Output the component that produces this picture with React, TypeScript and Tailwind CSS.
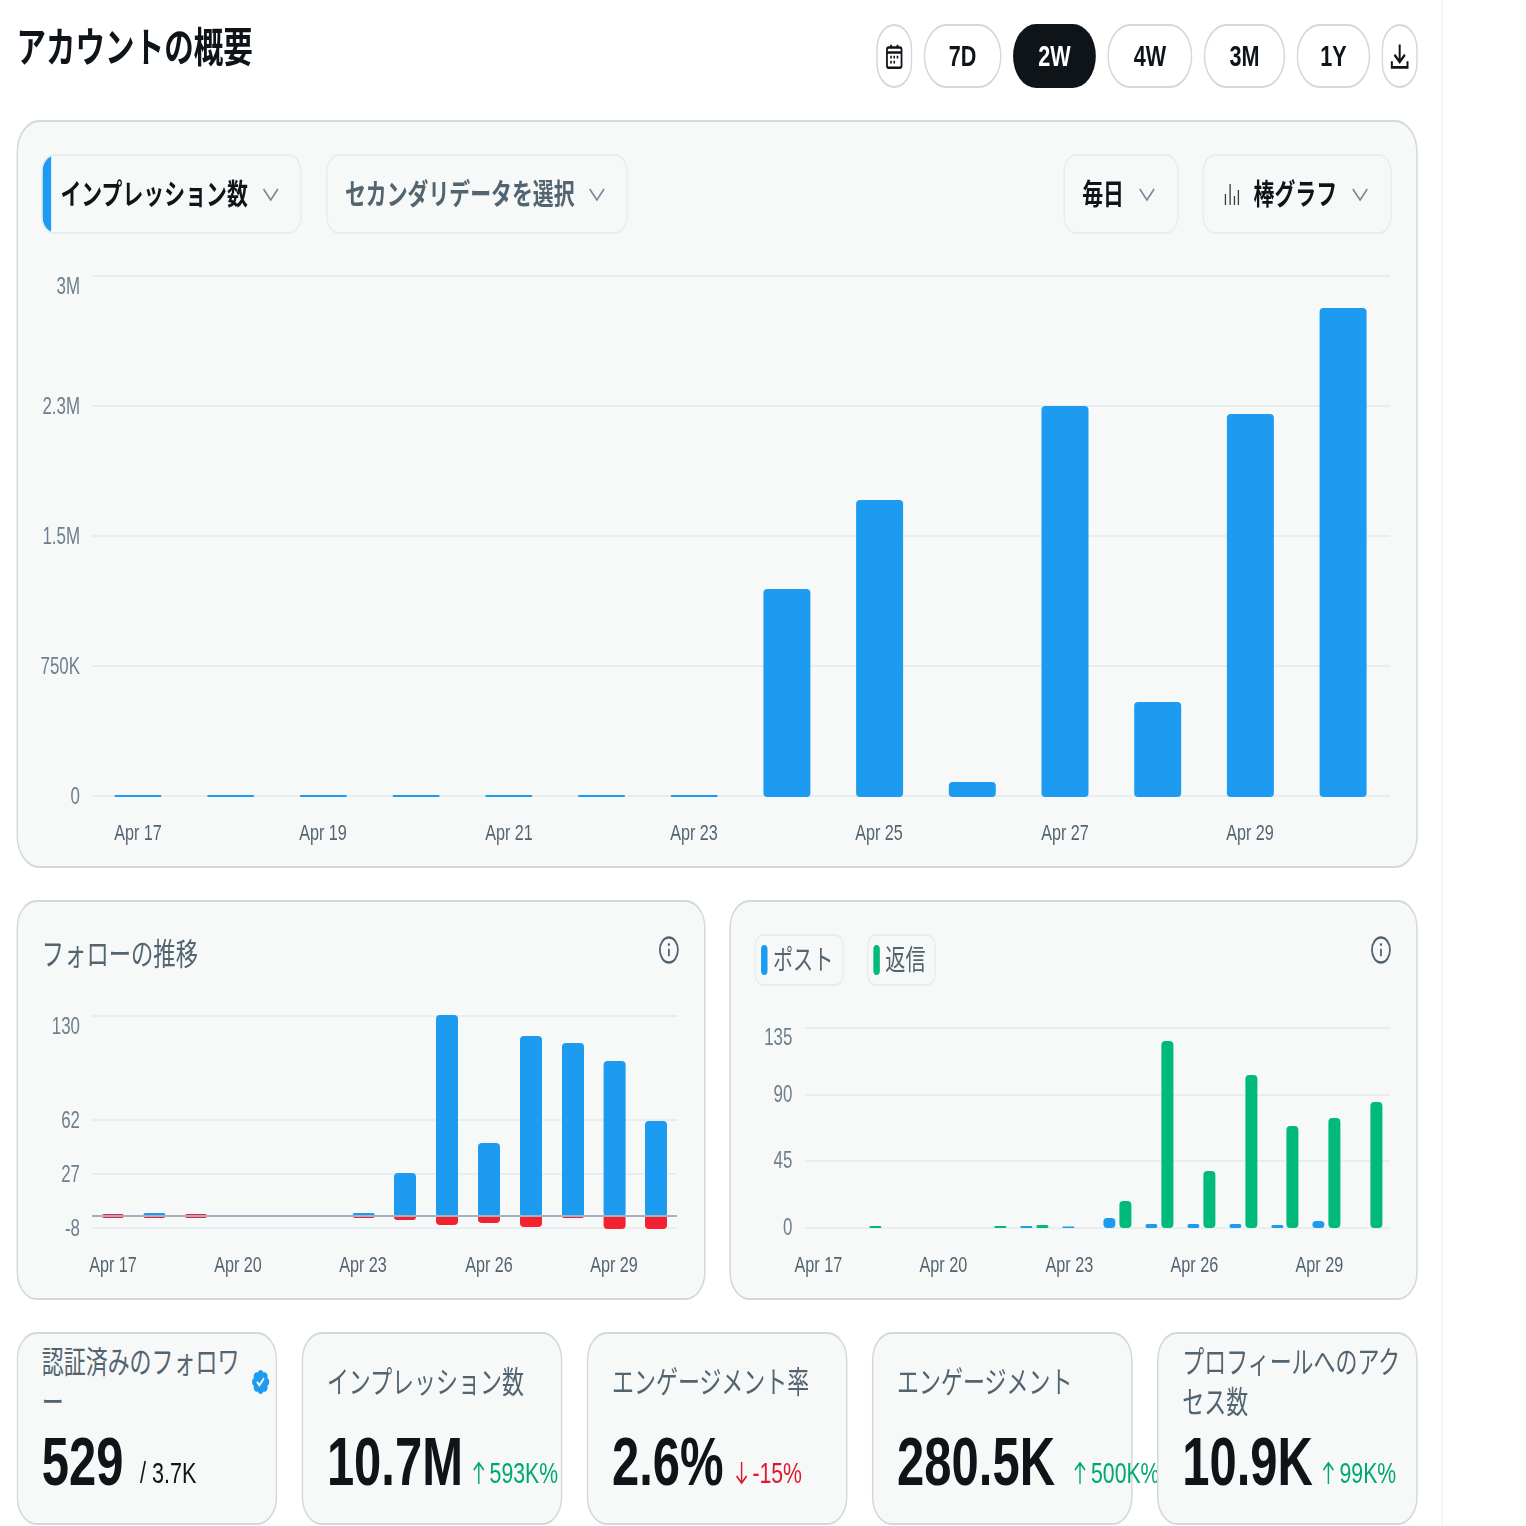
import React from "react";

const S = 0.72;

type Bar = { c: number; top: number; bottom: number; w: number; fill: string };

function barPath(b: Bar, ox: number, oy: number) {
  const x1 = (b.c - b.w / 2 - ox) / S;
  const x2 = (b.c + b.w / 2 - ox) / S;
  return { x: x1, width: x2 - x1, y: b.top - oy, height: b.bottom - b.top };
}

function Chart(props: {
  ox: number;
  oy: number;
  w: number;
  h: number;
  grid: number[];
  gx: [number, number];
  yLabels: [string, number][];
  yx: number;
  xLabels: [string, number][];
  xy: number;
  bars: Bar[];
  zero?: number;
}) {
  const { ox, oy, w, h } = props;
  const X = (x: number) => (x - ox) / S;
  return (
    <svg width={w / S} height={h} className="block overflow-visible">
      {props.grid.map((g) => (
        <line key={g} x1={X(props.gx[0])} x2={X(props.gx[1])} y1={g - oy} y2={g - oy} stroke="#e8edef" strokeWidth={2} />
      ))}
      {props.yLabels.map(([t, y]) => (
        <text key={t} x={X(props.yx)} y={y + 2 - oy} textAnchor="end" dominantBaseline="middle" fontSize={23.5} fill="#6e7f8d">
          {t}
        </text>
      ))}
      {props.xLabels.map(([t, x]) => (
        <text key={t} x={X(x)} y={props.xy + 2 - oy} textAnchor="middle" dominantBaseline="middle" fontSize={22.5} fill="#536471">
          {t}
        </text>
      ))}
      {props.bars.map((b, i) => {
        const p = barPath(b, ox, oy);
        const r = Math.min(4, p.height / 2);
        return <rect key={i} x={p.x} y={p.y} width={p.width} height={p.height} rx={r * 1.39} ry={r} fill={b.fill} />;
      })}
      {props.zero !== undefined && (
        <line x1={X(props.gx[0])} x2={X(props.gx[1])} y1={props.zero - oy} y2={props.zero - oy} stroke="#a3b2c2" strokeWidth={2} />
      )}
    </svg>
  );
}

const BLUE = "#1d9bf0";
const GREEN = "#00ba7c";
const RED = "#f4212e";

const mainTops = [795, 795, 795, 795, 795, 795, 795, 589, 500, 782, 406, 702, 414, 308];
const mainBars: Bar[] = mainTops.map((t, i) => ({ c: 138 + i * 92.7, top: t, bottom: 797, w: 47, fill: BLUE }));

const followUp: [number, number][] = [[154.4, 1213], [363.7, 1213], [405, 1173], [447, 1015], [489, 1143], [531, 1036], [573, 1043], [614.6, 1061], [656, 1121]];
const followDown: [number, number][] = [[113, 1218], [154.4, 1218], [196, 1218], [363.7, 1218], [405, 1220], [447, 1225], [489, 1223], [531, 1227], [573, 1218], [614.6, 1229], [656, 1229]];
const followBars: Bar[] = [
  ...followDown.map(([c, b]) => ({ c, top: 1214, bottom: b, w: 22, fill: RED })),
  ...followUp.map(([c, t]) => ({ c, top: t, bottom: 1217, w: 22, fill: BLUE })),
];

const replies: [number, number][] = [[875, 1226], [1000, 1226], [1042, 1225], [1125, 1201], [1167, 1041], [1209, 1171], [1251, 1075], [1292, 1126], [1334, 1118], [1376, 1102]];
const posts: [number, number][] = [[1026, 1226], [1068, 1226.5], [1109, 1218], [1151, 1224], [1193, 1224], [1235, 1224], [1277, 1225], [1318, 1221]];
const postBars: Bar[] = [
  ...posts.map(([c, t]) => ({ c, top: t, bottom: 1228, w: 12, fill: BLUE })),
  ...replies.map(([c, t]) => ({ c, top: t, bottom: 1228, w: 12, fill: GREEN })),
];

function Chevron({ className }: { className: string }) {
  return (
    <svg viewBox="0 0 24 24" className={className} fill="none" stroke="#7b8a96" strokeWidth={2}>
      <path d="M2 7l10 11L22 7" />
    </svg>
  );
}

function Info({ className }: { className: string }) {
  return (
    <svg viewBox="0 0 24 24" className={className} fill="none" stroke="#536471" strokeWidth={2}>
      <circle cx="12" cy="12" r="10" />
      <path d="M12 11v6" />
      <circle cx="12" cy="7.5" r="1.2" fill="#536471" stroke="none" />
    </svg>
  );
}

function PeriodButton({ label, className }: { label: string; className: string }) {
  return (
    <div className={`h-16 rounded-full border-2 border-[#cfd9de] flex items-center justify-center pb-[2px] text-[30px] font-bold text-[#0f1419] ${className}`}>
      {label}
    </div>
  );
}

function Delta({ dir, text, className, stroke }: { dir: "up" | "down"; text: string; className: string; stroke: string }) {
  return (
    <span className={`mb-[8px] h-[40px] flex items-center text-[29.5px] leading-[40px] ${className}`}>
      <svg viewBox="0 0 18 24" className="w-[18px] h-[24px] mr-[6px]" fill="none" stroke={stroke} strokeWidth={2}>
        {dir === "up" ? <path d="M9 23V2M2 9l7-7 7 7" /> : <path d="M9 1v21M2 15l7 7 7-7" />}
      </svg>
      {text}
    </span>
  );
}

function Stat(props: { title: string; value: string; delta?: React.ReactNode; sub?: string; badge?: boolean }) {
  return (
    <div className="h-[193px] rounded-[28px] border-2 border-[#cfd9de] bg-[#f7f9f9] pl-[33px] pt-[7px] flex flex-col">
      <div className="h-[82px] flex items-center shrink-0">
        <div className={`text-[30.5px] leading-[40px] text-[#536471] ${props.badge ? "w-[296px]" : "w-[320px]"}`}>{props.title}</div>
        {props.badge && (
          <svg viewBox="0 0 24 24" className="w-[28px] h-[28px] -ml-[6px] shrink-0" fill={BLUE}>
            <path d="M22.25 12c0-1.43-.88-2.67-2.19-3.34.46-1.39.2-2.9-.81-3.91s-2.52-1.27-3.91-.81c-.66-1.31-1.91-2.19-3.34-2.19s-2.67.88-3.33 2.19c-1.4-.46-2.91-.2-3.92.81s-1.26 2.52-.8 3.91c-1.31.67-2.2 1.91-2.2 3.34s.89 2.67 2.2 3.34c-.46 1.39-.21 2.9.8 3.91s2.52 1.26 3.91.81c.67 1.31 1.91 2.19 3.34 2.19s2.68-.88 3.34-2.19c1.39.45 2.9.2 3.91-.81s1.27-2.52.81-3.91c1.31-.67 2.19-1.91 2.19-3.34zm-11.71 4.2L6.8 12.46l1.41-1.42 2.26 2.26 4.8-5.23 1.47 1.36-6.2 6.77z" />
          </svg>
        )}
      </div>
      <div className="h-[80px] -mt-[2px] flex items-end whitespace-nowrap">
        <span className="text-[68px] leading-[80px] font-bold text-[#0f1419]">{props.value}</span>
        {props.sub && <span className="ml-[23px] mb-[8px] text-[30px] leading-[40px] text-[#0f1419]">{props.sub}</span>}
        {props.delta}
      </div>
    </div>
  );
}

export default function App() {
  return (
    <div className="w-[1526px] h-[1526px] overflow-hidden bg-white">
      <div className="w-[2119px] h-[1526px] origin-top-left scale-x-[.72] font-['Liberation_Sans','Noto_Sans_CJK_JP',sans-serif]">
        <div className="w-[2004px] h-[1526px] border-r-2 border-[#eff3f4] pl-[23px] pr-[33px] pt-6">
          <div className="flex justify-between items-start h-16 mb-[32px]">
            <h1 className="text-[41px] leading-[48px] font-bold text-[#0f1419]">アカウントの概要</h1>
            <div className="flex gap-4">
              <div className="w-[50px] h-16 rounded-full border-2 border-[#cfd9de] flex items-center justify-center">
                <svg viewBox="0 0 24 24" className="w-[30px] h-[27px]" fill="none" stroke="#0f1419" strokeWidth={2.2}>
                  <rect x="3" y="4" width="18" height="18" rx="2" />
                  <path d="M3 8.5h18M8 1.5v3M16 1.5v3" />
                  <path d="M7 12.5h2M11 12.5h2M15 12.5h2M7 17h2M11 17h2" strokeWidth={2.4} />
                </svg>
              </div>
              <PeriodButton label="7D" className="w-[108px]" />
              <div className="w-[115px] h-16 rounded-full bg-[#0f1419] flex items-center justify-center pb-[2px] text-[30px] font-bold text-white">2W</div>
              <PeriodButton label="4W" className="w-[118px]" />
              <PeriodButton label="3M" className="w-[113px]" />
              <PeriodButton label="1Y" className="w-[102px]" />
              <div className="w-[50px] h-16 rounded-full border-2 border-[#cfd9de] flex items-center justify-center">
                <svg viewBox="0 0 24 24" className="w-[32px] h-[29px]" fill="none" stroke="#0f1419" strokeWidth={2.3}>
                  <path d="M12 2v14M6 10.5l6 6 6-6M3 16v5h18v-5" />
                </svg>
              </div>
            </div>
          </div>

          <div className="h-[748px] rounded-[32px] border-2 border-[#cfd9de] bg-[#f7f9f9] overflow-hidden">
            <div className="flex justify-between pl-[32px] pr-[34px] pt-[32px]">
              <div className="flex gap-[34px]">
                <div className="w-[362px] h-20 rounded-[18px] border-2 border-[#e8edef] overflow-hidden flex items-center">
                  <div className="w-[12px] self-stretch bg-[#1d9bf0] shrink-0" />
                  <span className="ml-[13px] pt-[3px] text-[29px] font-bold text-[#0f1419] whitespace-nowrap">インプレッション数</span>
                  <Chevron className="ml-[20px] w-[24px] h-[24px]" />
                </div>
                <div className="w-[419px] h-20 rounded-[18px] border-2 border-[#e8edef] flex items-center pl-[24px]">
                  <span className="pt-[3px] text-[29px] font-bold text-[#536471] whitespace-nowrap">セカンダリデータを選択</span>
                  <Chevron className="ml-[19px] w-[24px] h-[24px]" />
                </div>
              </div>
              <div className="flex gap-[33px]">
                <div className="w-[160px] h-20 rounded-[18px] border-2 border-[#e8edef] flex items-center pl-[24px]">
                  <span className="pt-[3px] text-[29px] font-bold text-[#0f1419]">毎日</span>
                  <Chevron className="ml-[20px] w-[24px] h-[24px]" />
                </div>
                <div className="w-[263px] h-20 rounded-[18px] border-2 border-[#e8edef] flex items-center pl-[27px]">
                  <svg viewBox="0 0 24 24" className="w-[24px] h-[24px]" fill="none" stroke="#2f3b45" strokeWidth={1.8}>
                    <path d="M3 23V12M9.5 23V2M15.5 23V14M21 23V8" />
                  </svg>
                  <span className="ml-[18px] pt-[3px] text-[29px] font-bold text-[#0f1419]">棒グラフ</span>
                  <Chevron className="ml-[20px] w-[24px] h-[24px]" />
                </div>
              </div>
            </div>
            <Chart
              ox={18}
              oy={234}
              w={1398}
              h={631}
              grid={[276, 406, 536, 666, 796]}
              gx={[92, 1390]}
              yx={80}
              yLabels={[["3M", 286], ["2.3M", 406], ["1.5M", 536], ["750K", 666], ["0", 796]]}
              xy={832}
              xLabels={[["Apr 17", 138], ["Apr 19", 323], ["Apr 21", 509], ["Apr 23", 694], ["Apr 25", 879], ["Apr 27", 1065], ["Apr 29", 1250]]}
              bars={mainBars}
            />
          </div>

          <div className="grid grid-cols-2 gap-[33px] mt-[32px]">
            <div className="h-[400px] rounded-[28px] border-2 border-[#cfd9de] bg-[#f7f9f9] overflow-hidden">
              <div className="h-[98px] flex justify-between items-start pl-[33px] pr-[34px] pt-[33px]">
                <span className="text-[31px] leading-[40px] text-[#536471]">フォローの推移</span>
                <Info className="w-[30px] h-[30px]" />
              </div>
              <Chart
                ox={18}
                oy={1000}
                w={686}
                h={299}
                grid={[1016, 1120, 1174, 1228]}
                gx={[92, 677]}
                yx={80}
                yLabels={[["130", 1026], ["62", 1119.5], ["27", 1173.5], ["-8", 1227.5]]}
                xy={1264}
                xLabels={[["Apr 17", 113], ["Apr 20", 238], ["Apr 23", 363], ["Apr 26", 489], ["Apr 29", 614]]}
                bars={followBars}
                zero={1216}
              />
            </div>
            <div className="h-[400px] rounded-[28px] border-2 border-[#cfd9de] bg-[#f7f9f9] overflow-hidden">
              <div className="h-[98px] flex justify-between items-start pl-[33px] pr-[34px] pt-[32px]">
                <div className="flex gap-[32px]">
                  <div className="w-[124px] h-[52px] rounded-[12px] border-2 border-[#e8edef] flex items-center pl-[7px]">
                    <div className="w-[9px] h-[30px] rounded-full bg-[#1d9bf0]" />
                    <span className="ml-[8px] pt-[2px] text-[28px] text-[#536471]">ポスト</span>
                  </div>
                  <div className="w-[96px] h-[52px] rounded-[12px] border-2 border-[#e8edef] flex items-center pl-[7px]">
                    <div className="w-[9px] h-[30px] rounded-full bg-[#00ba7c]" />
                    <span className="ml-[8px] pt-[2px] text-[28px] text-[#536471]">返信</span>
                  </div>
                </div>
                <Info className="w-[30px] h-[30px] mt-[1px]" />
              </div>
              <Chart
                ox={730.4}
                oy={1000}
                w={686}
                h={299}
                grid={[1028, 1095, 1161, 1228]}
                gx={[805, 1390]}
                yx={792}
                yLabels={[["135", 1037], ["90", 1094], ["45", 1160], ["0", 1227]]}
                xy={1264}
                xLabels={[["Apr 17", 818], ["Apr 20", 943], ["Apr 23", 1069], ["Apr 26", 1194], ["Apr 29", 1319]]}
                bars={postBars}
              />
            </div>
          </div>

          <div className="grid grid-cols-5 gap-[34px] mt-[32px]">
            <Stat title="認証済みのフォロワー" value="529" sub="/ 3.7K" badge />
            <Stat title="インプレッション数" value="10.7M" delta={<Delta dir="up" text="593K%" className="ml-[13px] text-[#00a870]" stroke="#00a870" />} />
            <Stat title="エンゲージメント率" value="2.6%" delta={<Delta dir="down" text="-15%" className="ml-[16px] text-[#e0182d]" stroke="#e0182d" />} />
            <Stat title="エンゲージメント" value="280.5K" delta={<Delta dir="up" text="500K%" className="ml-[26px] text-[#00a870]" stroke="#00a870" />} />
            <Stat title="プロフィールへのアクセス数" value="10.9K" delta={<Delta dir="up" text="99K%" className="ml-[13px] text-[#00a870]" stroke="#00a870" />} />
          </div>
        </div>
      </div>
    </div>
  );
}
